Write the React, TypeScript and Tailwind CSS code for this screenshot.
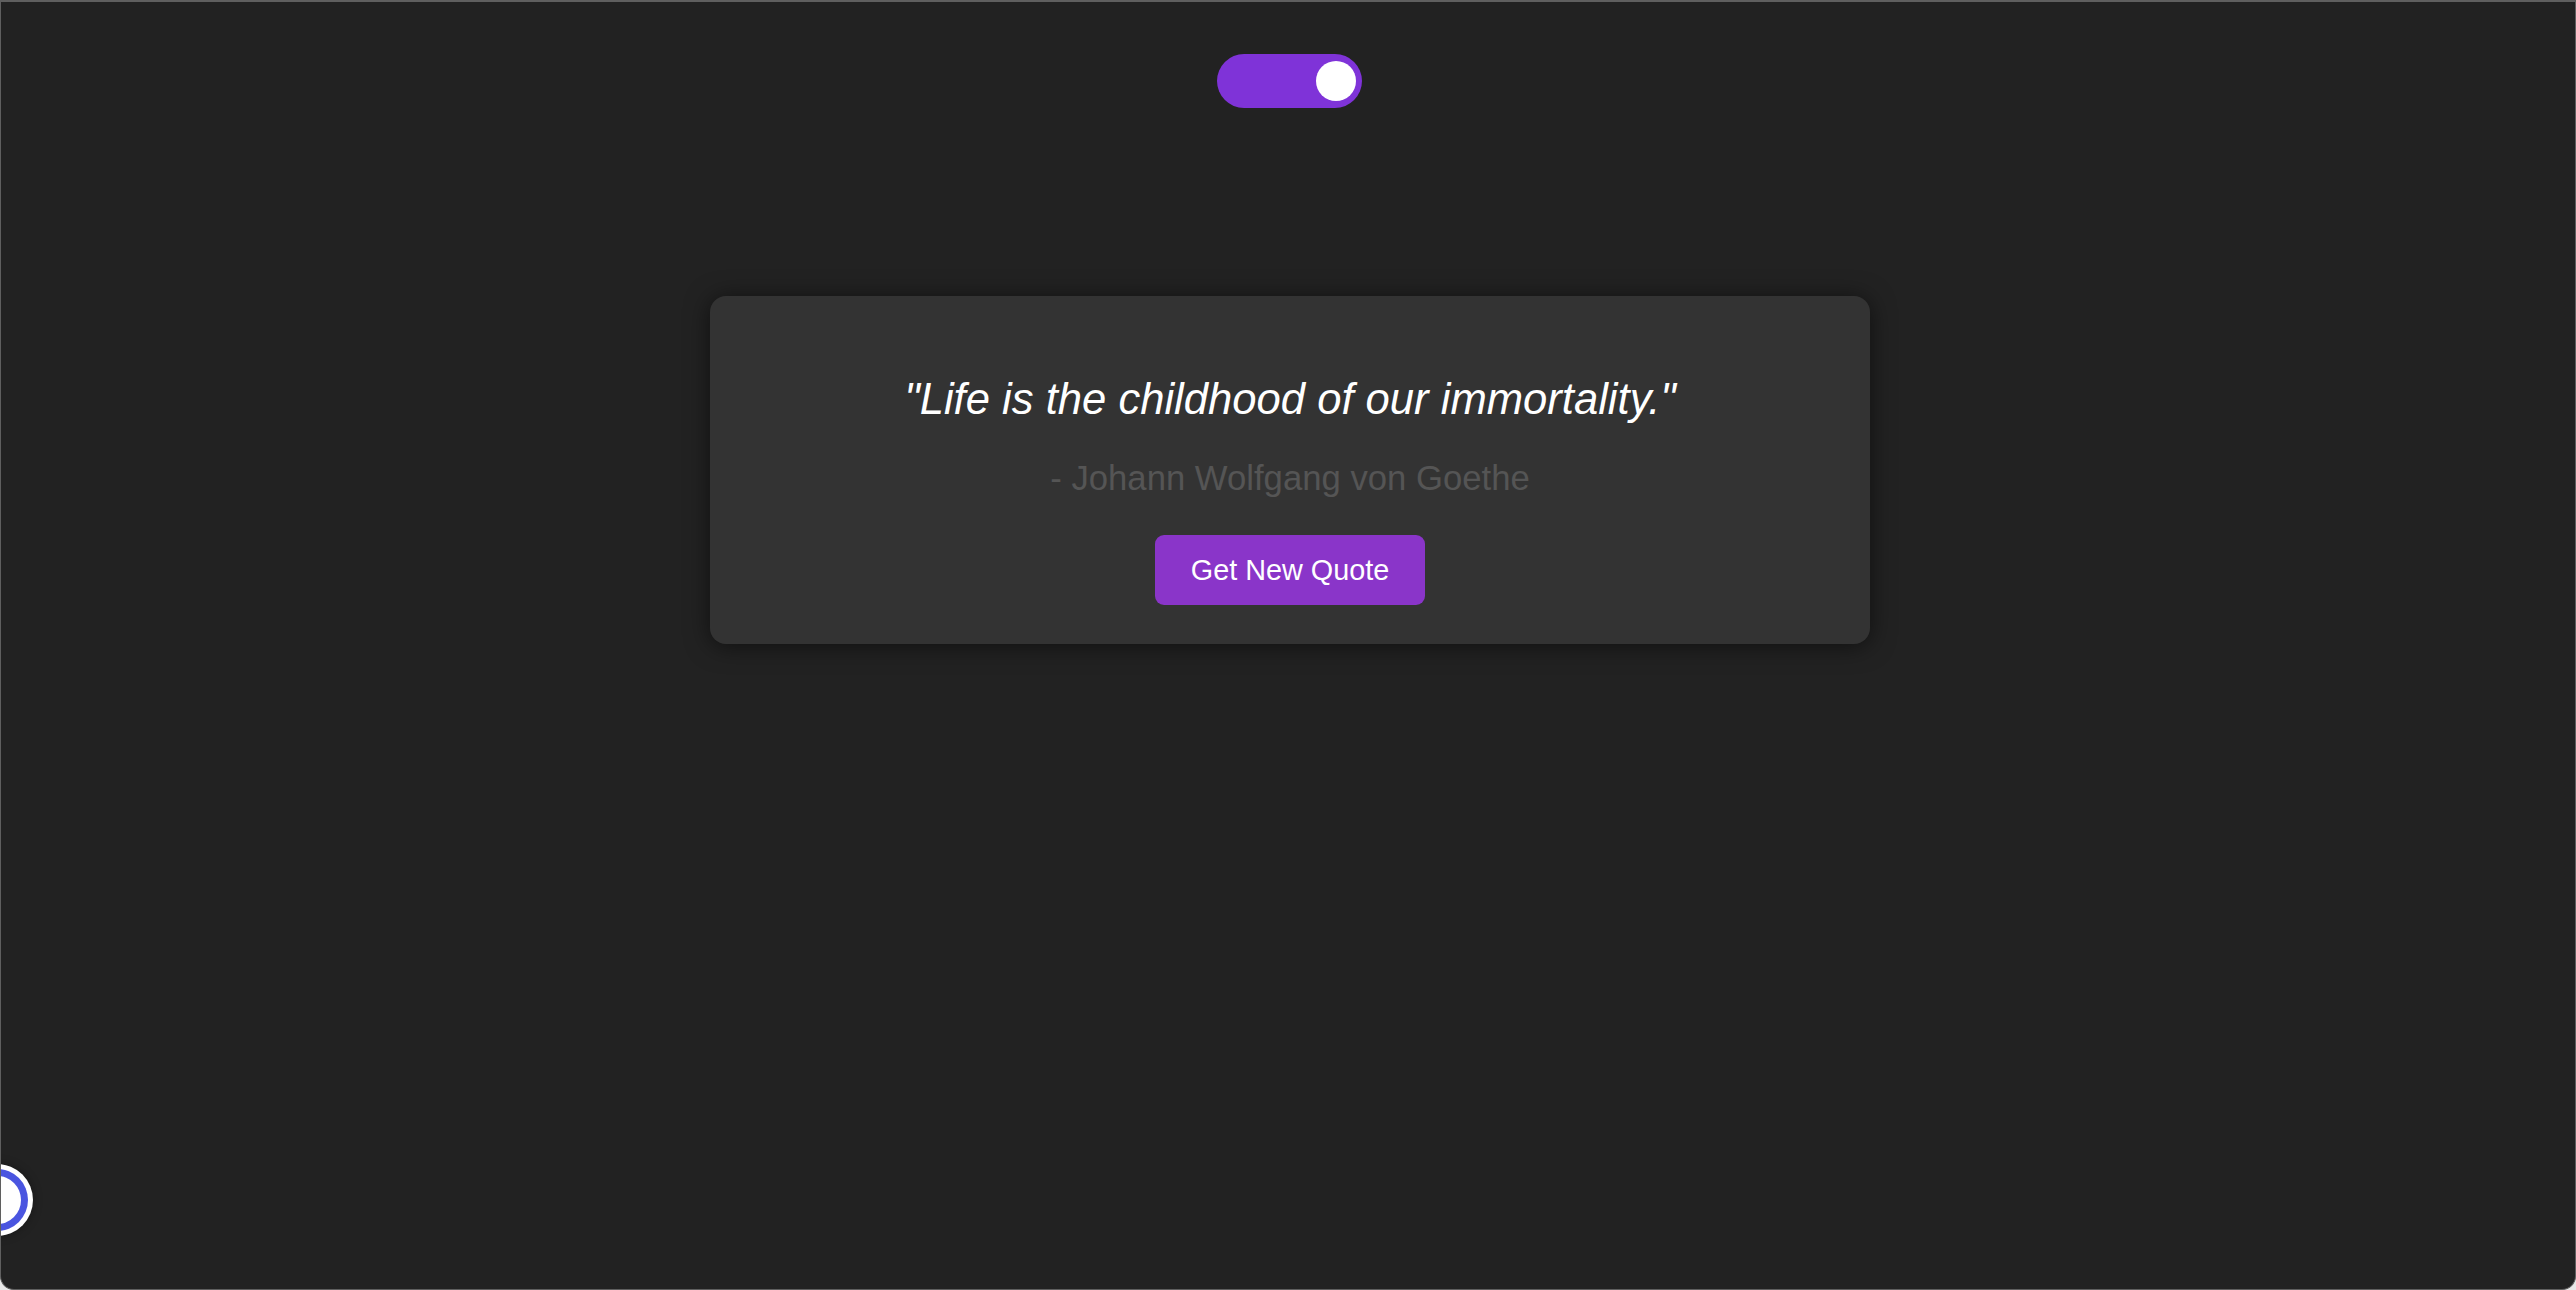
import React from "react";

export default function App() {
  return (
    <div className="w-[2576px] h-[1290px] bg-[#e8e8e8] overflow-hidden" style={{ fontFamily: '"Liberation Sans", Arial, sans-serif' }}>
      <div className="relative w-full h-full bg-[#222222] border border-[#5f5f5f] border-t-2 rounded-b-[14px] overflow-hidden flex flex-col items-center">
        {/* toggle */}
        <div className="mt-[52px] ml-[3px] w-[145px] h-[54px] rounded-full bg-[#7f33d8] flex items-center justify-end pr-[6px]">
          <div className="w-[40px] h-[40px] rounded-full bg-white" />
        </div>

        {/* card */}
        <div className="mt-[188px] ml-[4px] w-[1160px] rounded-[16px] bg-[#333333] shadow-[0_2px_24px_rgba(0,0,0,0.55)] flex flex-col items-center pt-[79px] pb-[39px]">
          <p className="text-[43.6px] leading-[49.6px] italic text-white m-0">
            "Life is the childhood of our immortality."
          </p>
          <p className="mt-[34px] text-[34.7px] leading-[39.7px] text-[#555555] m-0">
            - Johann Wolfgang von Goethe
          </p>
          <button className="mt-[37px] h-[70px] px-[36px] rounded-[9px] bg-[#8a35c9] text-white text-[28.8px] leading-[33px]">
            Get New Quote
          </button>
        </div>

        {/* floating widget */}
        <div className="absolute left-[-40px] top-[1162px] w-[72px] h-[72px] rounded-full bg-white shadow-[0_0_10px_rgba(0,0,0,0.35)] flex items-center justify-center">
          <div className="w-[62px] h-[62px] rounded-full bg-[#4a55e0] flex items-center justify-center">
            <div className="w-[48px] h-[48px] rounded-full bg-white" />
          </div>
        </div>
      </div>
    </div>
  );
}
